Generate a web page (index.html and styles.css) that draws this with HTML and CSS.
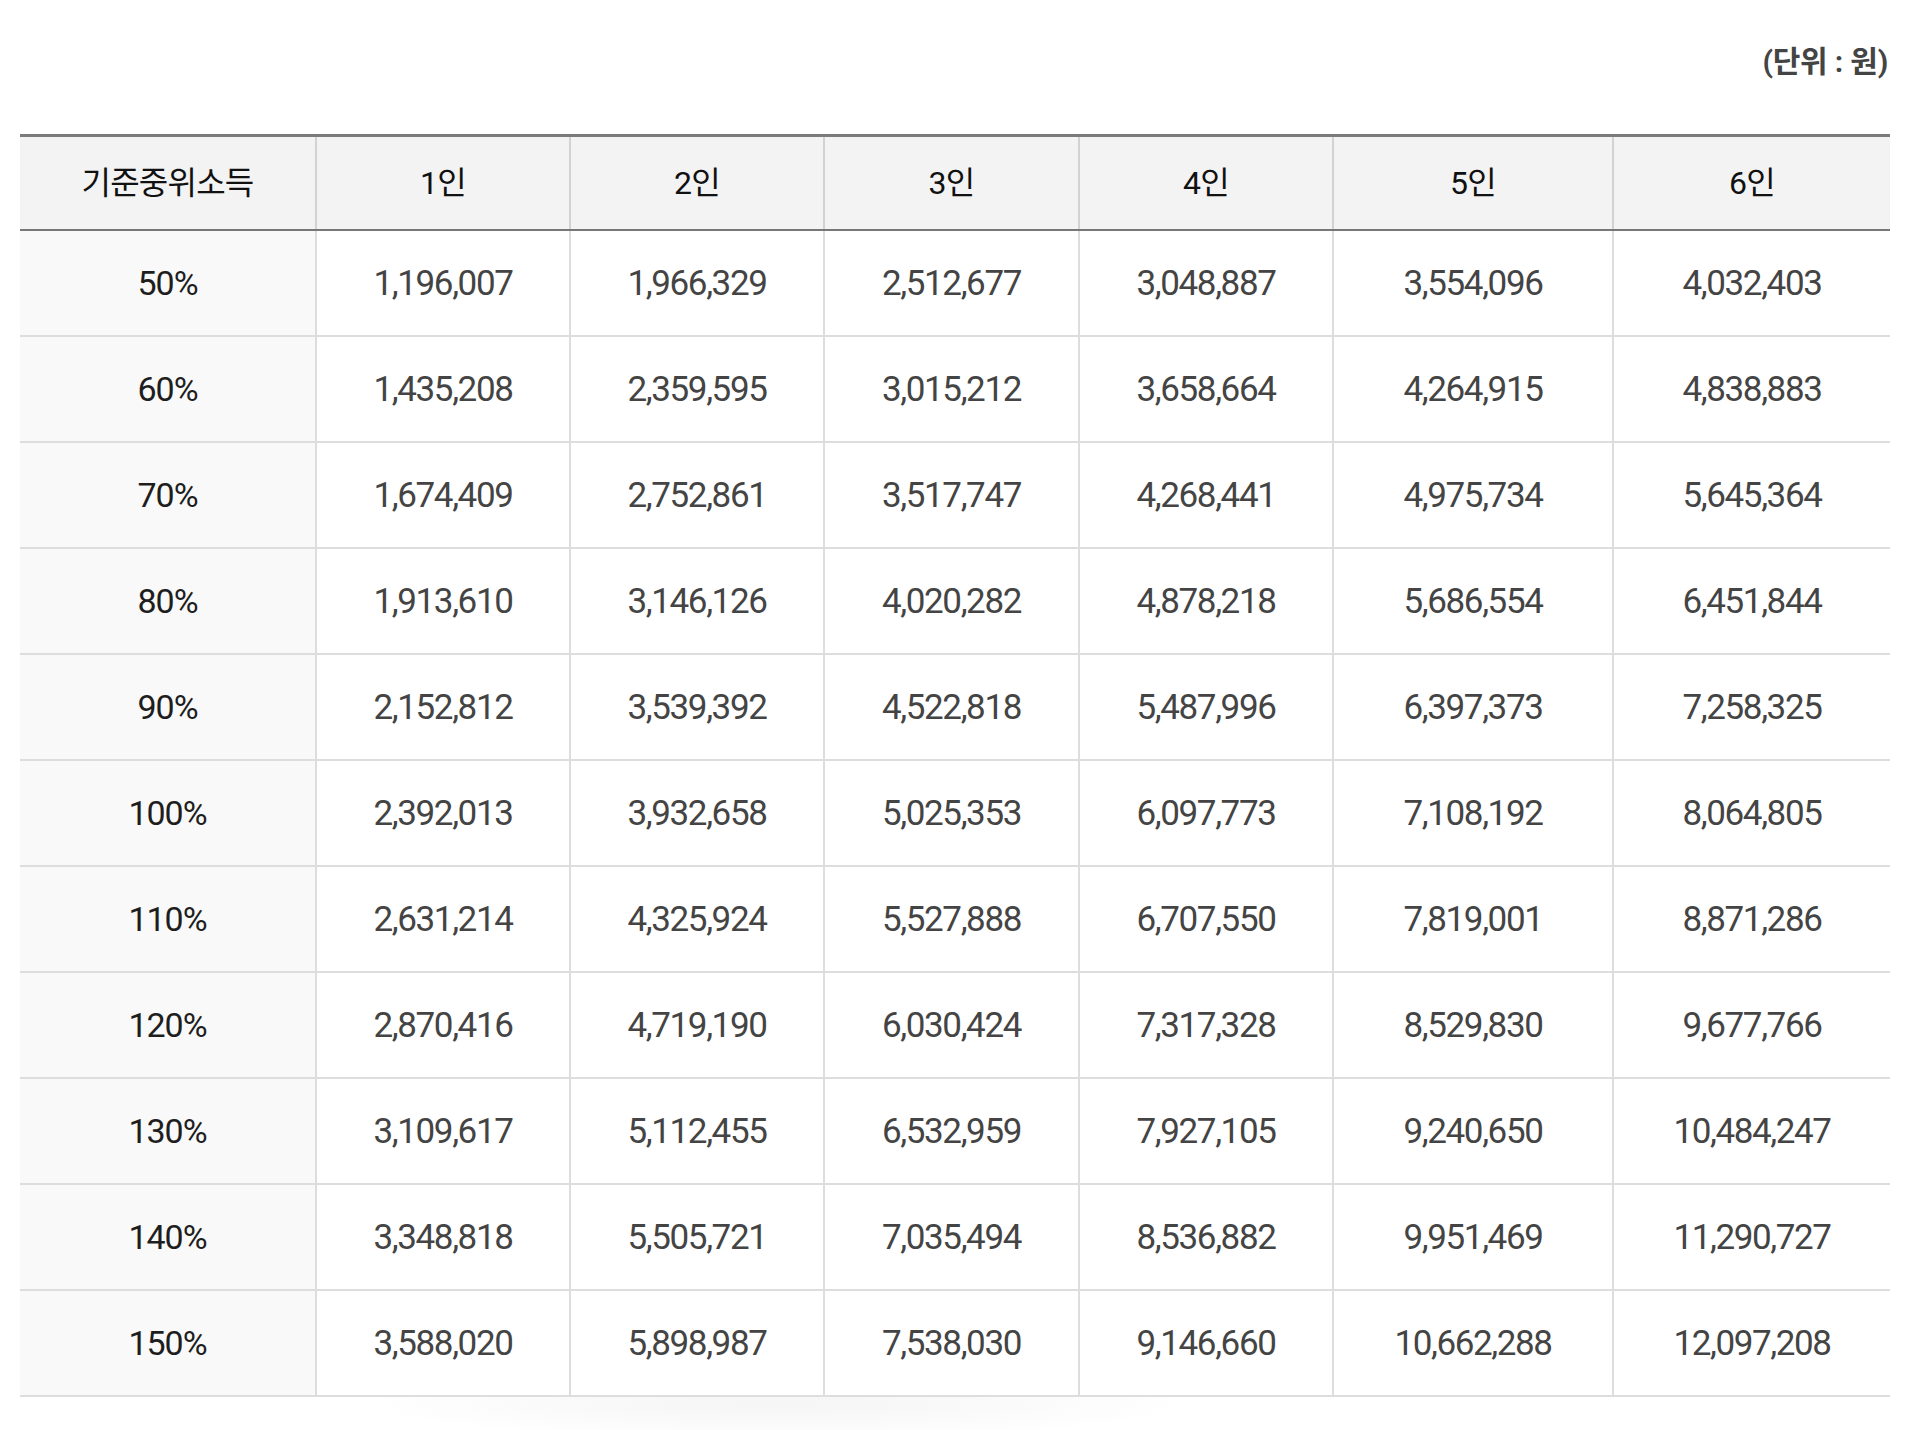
FILE: index.html
```html
<!DOCTYPE html>
<html lang="ko">
<head>
<meta charset="utf-8">
<title>기준중위소득</title>
<link rel="stylesheet" href="styles.css">
</head>
<body>
<div class="wrap">
  <p class="unit">(단위 : 원)</p>
  <table class="income">
    <colgroup>
      <col class="c0"><col class="c1"><col class="c2"><col class="c3"><col class="c4"><col class="c5"><col class="c6">
    </colgroup>
    <thead>
      <tr><th>기준중위소득</th><th>1인</th><th>2인</th><th>3인</th><th>4인</th><th>5인</th><th>6인</th></tr>
    </thead>
    <tbody>
      <tr><td>50%</td><td>1,196,007</td><td>1,966,329</td><td>2,512,677</td><td>3,048,887</td><td>3,554,096</td><td>4,032,403</td></tr>
      <tr><td>60%</td><td>1,435,208</td><td>2,359,595</td><td>3,015,212</td><td>3,658,664</td><td>4,264,915</td><td>4,838,883</td></tr>
      <tr><td>70%</td><td>1,674,409</td><td>2,752,861</td><td>3,517,747</td><td>4,268,441</td><td>4,975,734</td><td>5,645,364</td></tr>
      <tr><td>80%</td><td>1,913,610</td><td>3,146,126</td><td>4,020,282</td><td>4,878,218</td><td>5,686,554</td><td>6,451,844</td></tr>
      <tr><td>90%</td><td>2,152,812</td><td>3,539,392</td><td>4,522,818</td><td>5,487,996</td><td>6,397,373</td><td>7,258,325</td></tr>
      <tr><td>100%</td><td>2,392,013</td><td>3,932,658</td><td>5,025,353</td><td>6,097,773</td><td>7,108,192</td><td>8,064,805</td></tr>
      <tr><td>110%</td><td>2,631,214</td><td>4,325,924</td><td>5,527,888</td><td>6,707,550</td><td>7,819,001</td><td>8,871,286</td></tr>
      <tr><td>120%</td><td>2,870,416</td><td>4,719,190</td><td>6,030,424</td><td>7,317,328</td><td>8,529,830</td><td>9,677,766</td></tr>
      <tr><td>130%</td><td>3,109,617</td><td>5,112,455</td><td>6,532,959</td><td>7,927,105</td><td>9,240,650</td><td>10,484,247</td></tr>
      <tr><td>140%</td><td>3,348,818</td><td>5,505,721</td><td>7,035,494</td><td>8,536,882</td><td>9,951,469</td><td>11,290,727</td></tr>
      <tr><td>150%</td><td>3,588,020</td><td>5,898,987</td><td>7,538,030</td><td>9,146,660</td><td>10,662,288</td><td>12,097,208</td></tr>
    </tbody>
  </table>
  <div class="shade"></div>
</div>
</body>
</html>
```

FILE: styles.css
```css
html, body {
  margin: 0;
  padding: 0;
  background: #ffffff;
}

body {
  font-family: Roboto, "Noto Sans CJK KR", sans-serif;
}

.wrap {
  padding: 42px 26px 0 20px;
  width: 1870px;
}

.unit {
  margin: 0 0 52px;
  text-align: right;
  font-size: 30px;
  line-height: 40px;
  font-weight: 700;
  letter-spacing: -0.2px;
  color: #444444;
  padding-right: 2px;
}

.income {
  width: 1870px;
  table-layout: fixed;
  border-collapse: collapse;
  border-top: 3px solid #7b7b7b;
}

.c0 { width: 296px; }
.c1 { width: 254px; }
.c2 { width: 254px; }
.c3 { width: 255px; }
.c4 { width: 254px; }
.c5 { width: 280px; }
.c6 { width: 277px; }

.income th {
  height: 86px;
  padding: 0 0 6px;
  background: #f3f3f3;
  border-bottom: 2px solid #777777;
  border-left: 2px solid #d2d2d2;
  font-weight: 400;
  font-size: 32px;
  letter-spacing: -0.8px;
  color: #111111;
  text-align: center;
  vertical-align: middle;
}

.income td {
  height: 104px;
  padding: 0;
  border-bottom: 2px solid #dddddd;
  border-left: 2px solid #dddddd;
  font-size: 35px;
  letter-spacing: -1.4px;
  color: #444444;
  text-align: center;
  vertical-align: middle;
}

.income th:first-child,
.income td:first-child {
  border-left: 0;
}

.income td:first-child {
  background: #f9f9f9;
  color: #1e1e1e;
  font-size: 34px;
  letter-spacing: -1px;
}

.shade {
  margin-left: 343px;
  width: 830px;
  height: 60px;
  background: radial-gradient(ellipse 50% 60% at 50% 10%, #f5f5f5 0%, #fafafa 55%, rgba(255,255,255,0) 100%);
}
```
